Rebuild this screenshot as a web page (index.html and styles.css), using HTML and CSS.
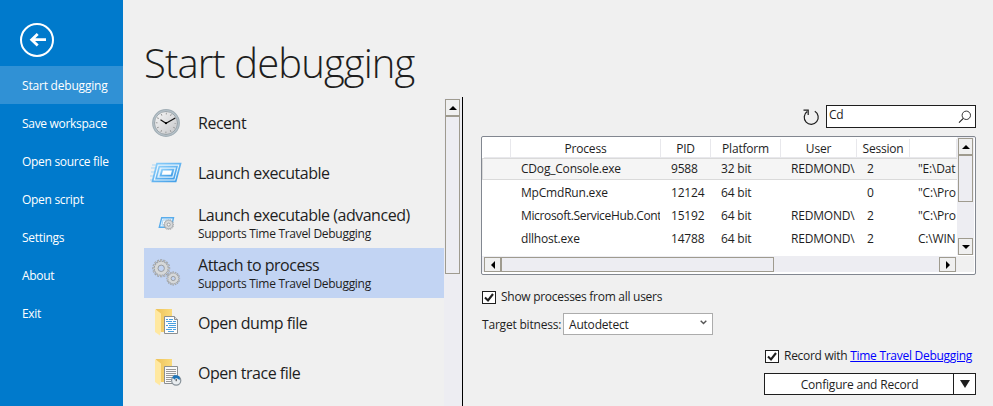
FILE: index.html
```html
<!DOCTYPE html>
<html lang="en">
<head>
<meta charset="utf-8">
<title>Start debugging</title>
<link rel="stylesheet" href="styles.css">
</head>
<body>
<svg width="0" height="0" class="defs" aria-hidden="true">
  <defs>
    <linearGradient id="folderBack" x1="0" x2="1"><stop offset="0" stop-color="#eec35a"/><stop offset="1" stop-color="#fadb7d"/></linearGradient>
    <linearGradient id="face" x1="0" y1="0" x2="1" y2="1"><stop offset="0" stop-color="#f8f8f8"/><stop offset="1" stop-color="#c4c5c8"/></linearGradient>
    <linearGradient id="blue" x1="0" x2="1" y2="1"><stop offset="0" stop-color="#8fd0fb"/><stop offset="1" stop-color="#3d9be6"/></linearGradient>
    <g id="teeth"><path d="M0-13V13M-13 0H13M-9.200-9.200L9.200 9.200M-9.200 9.200L9.200-9.200M-5-12L5 12M5-12L-5 12M-12-5L12 5M-12 5L12-5"/></g>
    <g id="gear">
      <use href="#teeth" stroke="#9a9da0" stroke-width="3"/>
      <circle r="10.500" fill="#9a9da0"/>
      <use href="#teeth" stroke="#d3d5d6" stroke-width="1.200" transform="scale(.94)"/>
      <circle r="9.400" fill="#d6d8d9"/>
    </g>
    <g id="folder">
      <path d="M6 4h16v23H11z" fill="url(#folderBack)"/>
      <path d="M5 4l6 4.500V25l-1 5.500L5 27z" fill="#ffe8a0"/>
    </g>
  </defs>
</svg>
<div class="app">
  <nav class="side">
    <svg class="back" width="36" height="36" viewBox="0 0 36 36"><circle cx="18" cy="18" r="16" fill="none" stroke="#fff" stroke-width="2"/><path d="M27 17.700H13M18.700 12l-6 5.700 6 5.700" fill="none" stroke="#fff" stroke-width="2.800"/></svg>
    <a class="nav on">Start debugging</a>
    <a class="nav">Save workspace</a>
    <a class="nav">Open source file</a>
    <a class="nav">Open script</a>
    <a class="nav">Settings</a>
    <a class="nav">About</a>
    <a class="nav">Exit</a>
  </nav>
  <main class="main">
    <h1>Start debugging</h1>
    <div class="cols">
      <div class="list">
        <div class="item">
          <svg width="36" height="36" viewBox="0 0 36 36"><circle cx="18" cy="18" r="13.300" fill="#b9c5cd" stroke="#a3afb6" stroke-width="1.200"/><circle cx="18" cy="18" r="11.500" fill="url(#face)" stroke="#8d989e" stroke-width=".8"/><circle cx="18" cy="18" r="9.300" fill="none" stroke="#929292" stroke-width="1.800" stroke-dasharray=".9 3.970" stroke-dashoffset=".45"/><path d="M12.500 14.800l5.500 3.400 9.300-5.200" fill="none" stroke="#151515" stroke-width="1.200"/><circle cx="18" cy="18.200" r="1.100"/></svg>
          <div><b>Recent</b></div>
        </div>
        <div class="item">
          <svg width="36" height="36" viewBox="0 0 36 36"><path d="M4 10h8M3 13h7M3 17h6M2 21h7M2 25h7" stroke="#a9d6f5" stroke-width="1"/><path d="M9 8.700h23.500L27.700 26.400H4.500z" fill="#e9f5fd" stroke="url(#blue)" stroke-width="1.700"/><path d="M11.300 11.600H29l-3.200 12H8.100z" fill="#dff0fc" stroke="url(#blue)" stroke-width="1.600"/><path d="M14.200 14.600h11l-1.600 6H12.600z" fill="#fff" stroke="url(#blue)" stroke-width="1.900"/></svg>
          <div><b>Launch executable</b></div>
        </div>
        <div class="item">
          <svg width="36" height="36" viewBox="0 0 36 36"><path d="M13.700 12.700h11.800l-2.200 9.600h-12z" fill="#e2f2fd" stroke="#59aceb" stroke-width="1.400"/><path d="M15 15h8l-1 5h-8z" fill="#fff" stroke="#a6d3f4"/><use href="#gear" transform="translate(20.700 19.600) scale(.4)"/><circle cx="20.700" cy="19.600" r="1.500" fill="#f7f7f7" stroke="#8d9194" stroke-width=".8"/></svg>
          <div><b>Launch executable (advanced)</b><small>Supports Time Travel Debugging</small></div>
        </div>
        <div class="item sel">
          <svg width="36" height="36" viewBox="0 0 36 36"><use href="#gear" transform="translate(13.200 13.300) scale(.69)"/><circle cx="13.200" cy="13.300" r="3.200" fill="#c2d4f3" stroke="#9a9da0"/><use href="#gear" transform="translate(25.200 23.500) scale(.53)"/><circle cx="25.200" cy="23.500" r="2.100" fill="#c2d4f3" stroke="#9a9da0"/></svg>
          <div><b>Attach to process</b><small>Supports Time Travel Debugging</small></div>
        </div>
        <div class="item">
          <svg width="36" height="36" viewBox="0 0 36 36"><use href="#folder" x="2"/><path d="M16.500 11.500h10l3 3v14h-13z" fill="#fdfdfd" stroke="#8c8f91"/><path d="M26.500 11.500v3h3" fill="#ddd" stroke="#8c8f91"/><path d="M18 14.500h2m1 0h4M18 16.500h6m1 0h3M20 18.500h8M18 20.500h2m1 0h7M20 22.500h8M18 24.500h6m1 0h3M20 26.500h6" stroke="#4aa0e0" stroke-width="1"/></svg>
          <div><b>Open dump file</b></div>
        </div>
        <div class="item">
          <svg width="36" height="36" viewBox="0 0 36 36"><use href="#folder" x="2"/><path d="M16.500 11.500h13v17h-13z" fill="#fafafa" stroke="#8c8f91"/><path d="M18 14.500h10M18 16.500h10M18 18.500h10M18 20.500h8M18 22.500h6M18 24.500h6M18 26.500h5" stroke="#999" stroke-width="1"/><circle cx="28.200" cy="25.500" r="4.600" fill="#e9edf0" stroke="#879199" stroke-width="1.200"/><path d="M27 19.500l-3 3 3 2.200.5-1.500c2 0 3 .6 3.700 2 2.200-3-.6-5.200-3.700-5z" fill="#1f75b8"/><path d="M28.200 24v2.200" stroke="#333"/></svg>
          <div><b>Open trace file</b></div>
        </div>
      </div>
      <div class="lscroll"><div class="sbtn"><svg width="8" height="4"><path d="M0 4L4 0l4 4z"/></svg></div><div class="sthumb"></div></div>
      <section class="panel">
        <div class="tools">
          <svg width="20" height="20" viewBox="0 0 20 20"><path d="M6.200 4.600A7 7 0 1 0 13.800 4.300M2.500 3.200h4.700v4.800" fill="none" stroke="#1e1e1e" stroke-width="1.200"/></svg>
          <div class="search"><span>Cd</span><svg width="14" height="14" viewBox="0 0 14 14"><circle cx="8.300" cy="5.300" r="4.200" fill="none" stroke="#1e1e1e" stroke-width=".9"/><path d="M5.300 8.300L1 12.600" stroke="#1e1e1e" stroke-width="1.100"/></svg></div>
        </div>
        <div class="grid">
          <div class="view">
            <div class="row head"><span></span><span>Process</span><span>PID</span><span>Platform</span><span>User</span><span>Session</span><span></span></div>
            <div class="row hot"><span></span><span>CDog_Console.exe</span><span>9588</span><span>32 bit</span><span>REDMOND\</span><span>2</span><span class="cmd">"E:\Dat</span></div>
            <div class="row"><span></span><span>MpCmdRun.exe</span><span>12124</span><span>64 bit</span><span></span><span>0</span><span class="cmd">"C:\Pro</span></div>
            <div class="row"><span></span><span class="long">Microsoft.ServiceHub.Cont</span><span>15192</span><span>64 bit</span><span>REDMOND\</span><span>2</span><span class="cmd">"C:\Pro</span></div>
            <div class="row"><span></span><span>dllhost.exe</span><span>14788</span><span>64 bit</span><span>REDMOND\</span><span>2</span><span class="cmd">C:\WIN</span></div>
          </div>
          <div class="vs"><div class="sbtn"><svg width="8" height="4"><path d="M0 4L4 0l4 4z"/></svg></div><div class="sthumb"></div><div class="sbtn end"><svg width="8" height="4"><path d="M0 0l4 4 4-4z"/></svg></div></div>
          <div class="hs"><div class="sbtn"><svg width="4" height="8"><path d="M4 0L0 4l4 4z"/></svg></div><div class="sthumb"></div><div class="sbtn end"><svg width="4" height="8"><path d="M0 0l4 4-4 4z"/></svg></div></div>
          <div class="corner"></div>
        </div>
        <div class="check"><i class="box"><svg width="12" height="11" viewBox="0 0 12 11"><path d="M2 5.500l3 3L10 2" fill="none" stroke="#1e1e1e" stroke-width="2.100"/></svg></i><span>Show processes from all users</span></div>
        <div class="bit"><span>Target bitness:</span><div class="combo"><span>Autodetect</span><svg width="7" height="5" viewBox="0 0 7 5"><path d="M.7.700l2.800 2.800L6.300.700" fill="none" stroke="#555" stroke-width="1.400"/></svg></div></div>
        <div class="check rec"><i class="box"><svg width="12" height="11" viewBox="0 0 12 11"><path d="M2 5.500l3 3L10 2" fill="none" stroke="#1e1e1e" stroke-width="2.100"/></svg></i><span>Record with <a>Time Travel Debugging</a></span></div>
        <div class="split"><div class="go">Configure and Record</div><div class="drop"><svg width="10" height="8"><path d="M0 0h10L5 8z" fill="#1e1e1e"/></svg></div></div>
      </section>
    </div>
  </main>
</div>
</body>
</html>
```
FILE: styles.css
```css
* { box-sizing: border-box; }
body { margin: 0; font: 12px/16px "Open Sans", "Noto Sans", sans-serif; color: #1e1e1e; background: #f0f0f0; letter-spacing: -.2px; }
svg { display: block; flex: none; }
.defs { position: absolute; }
.app { display: flex; width: 993px; height: 406px; overflow: hidden; }
.side { width: 123px; background: #007acc; color: #fff; flex: none; padding-top: 22px; letter-spacing: -.3px; }
.back { margin: 0 0 8px 19px; }
.nav { display: flex; align-items: center; height: 38px; padding: 2px 0 0 22px; white-space: nowrap; }
.nav.on { background: #3091d5; letter-spacing: -.2px; }
.main { flex: 1; padding-left: 21px; min-width: 0; }
h1 { margin: 0; height: 97px; padding-top: 33px; font-size: 40px; line-height: 60px; font-weight: 300; letter-spacing: -.9px; }
.cols { display: flex; height: 309px; }
.list { width: 300px; padding-top: 1px; flex: none; }
.item { height: 50px; display: flex; align-items: center; padding-left: 4px; gap: 14px; white-space: nowrap; }
.item.sel { background: #c2d4f3; }
.item b { display: block; font-weight: 400; font-size: 16px; line-height: 20px; letter-spacing: -.48px; }
.item small { display: block; font-size: 12px; line-height: 15px; letter-spacing: -.29px; padding-top: 1px; }
.lscroll { width: 18px; background: #ededf2; padding: 1px 2px 0 1px; flex: none; margin-top: 1px; }
.sbtn { width: 15px; height: 17px; border: 1px solid #9f9b8f; background: #f0f0f0; display: flex; align-items: center; justify-content: center; }
.sthumb { border: 1px solid #9f9b8f; background: #ededf2; }
.lscroll .sthumb { width: 15px; height: 158px; }
.panel { flex: 1; border-left: 1px solid #000; padding: 8px 17px 0 18px; min-width: 0; }
.tools { display: flex; justify-content: flex-end; align-items: center; gap: 5px; height: 23px; margin-bottom: 8px; }
.search { width: 150px; height: 23px; border: 1px solid #1e1e1e; background: #fff; display: flex; justify-content: space-between; padding: 1px 3px 0 2px; }
.search svg { margin-top: 3px; }
.grid { width: 495px; height: 139px; border: 1px solid #828790; border-radius: 2px; background: #fff; display: grid; grid-template: 118px 17px / 475px 17px; }
.view { overflow: hidden; padding: 1px 0 0 1px; }
.row { display: grid; grid-template-columns: 27px 150px 50px 70px 76px 53px 47px; height: 22px; margin-bottom: 1px; white-space: nowrap; align-items: center; padding-left: 1px; }
.row span { padding: 0 0 0 10px; overflow: hidden; margin-right: 1px; }
.row .long { letter-spacing: -.35px; }
.row .cmd { padding-left: 8px; margin-right: 0; }
.row.head { height: 20px; margin-bottom: 0; }
.head span { height: 19px; line-height: 19px; margin: 0; padding: 0; text-align: center; border-right: 1px solid #e8e8ec; border-bottom: 1px solid #e8e8ec; }
.row.hot { background: #f5f5f5; border: 1px solid #dadada; border-right: 0; margin-left: -1px; margin-bottom: 2px; }
.vs { background: #ededf2; padding: 1px 1px 0; display: flex; flex-direction: column; }
.vs .sthumb { width: 15px; height: 47px; }
.vs .end { margin-top: auto; }
.hs { background: #ededf2; display: flex; padding: 1px 1px 0 2px; margin-top: 1px; }
.hs .sbtn { width: 17px; height: 15px; }
.hs .sthumb { width: 273px; height: 15px; }
.hs .end { margin-left: auto; }
.corner { background: #f0f0f0; margin-top: 1px; }
.check { display: flex; align-items: center; height: 16px; margin-top: 14px; gap: 5px; letter-spacing: -.28px; }
.box { width: 14px; height: 13px; border: 1px solid #1e1e1e; background: #fff; flex: none; margin-left: 1px; }
.bit { display: flex; align-items: center; margin-top: 8px; height: 22px; }
.bit > span { width: 82px; padding: 1px 0 0 1px; }
.combo { width: 150px; height: 22px; border: 1px solid #acacac; background: #fff; display: flex; justify-content: space-between; align-items: center; padding: 0 5px; }
.combo svg { margin-top: -3px; }
.combo span { padding-top: 1px; }
.rec { margin: 13px 0 0 283px; white-space: nowrap; }
.rec a { color: #00f; text-decoration: underline; }
.split { display: flex; width: 212px; height: 22px; margin: 9px 0 0 283px; border: 1px solid #1e1e1e; background: #fff; }
.go { flex: 1; text-align: center; line-height: 22px; padding-left: 1px; }
.drop { width: 22px; border-left: 1px solid #1e1e1e; display: flex; align-items: center; justify-content: center; }
```
